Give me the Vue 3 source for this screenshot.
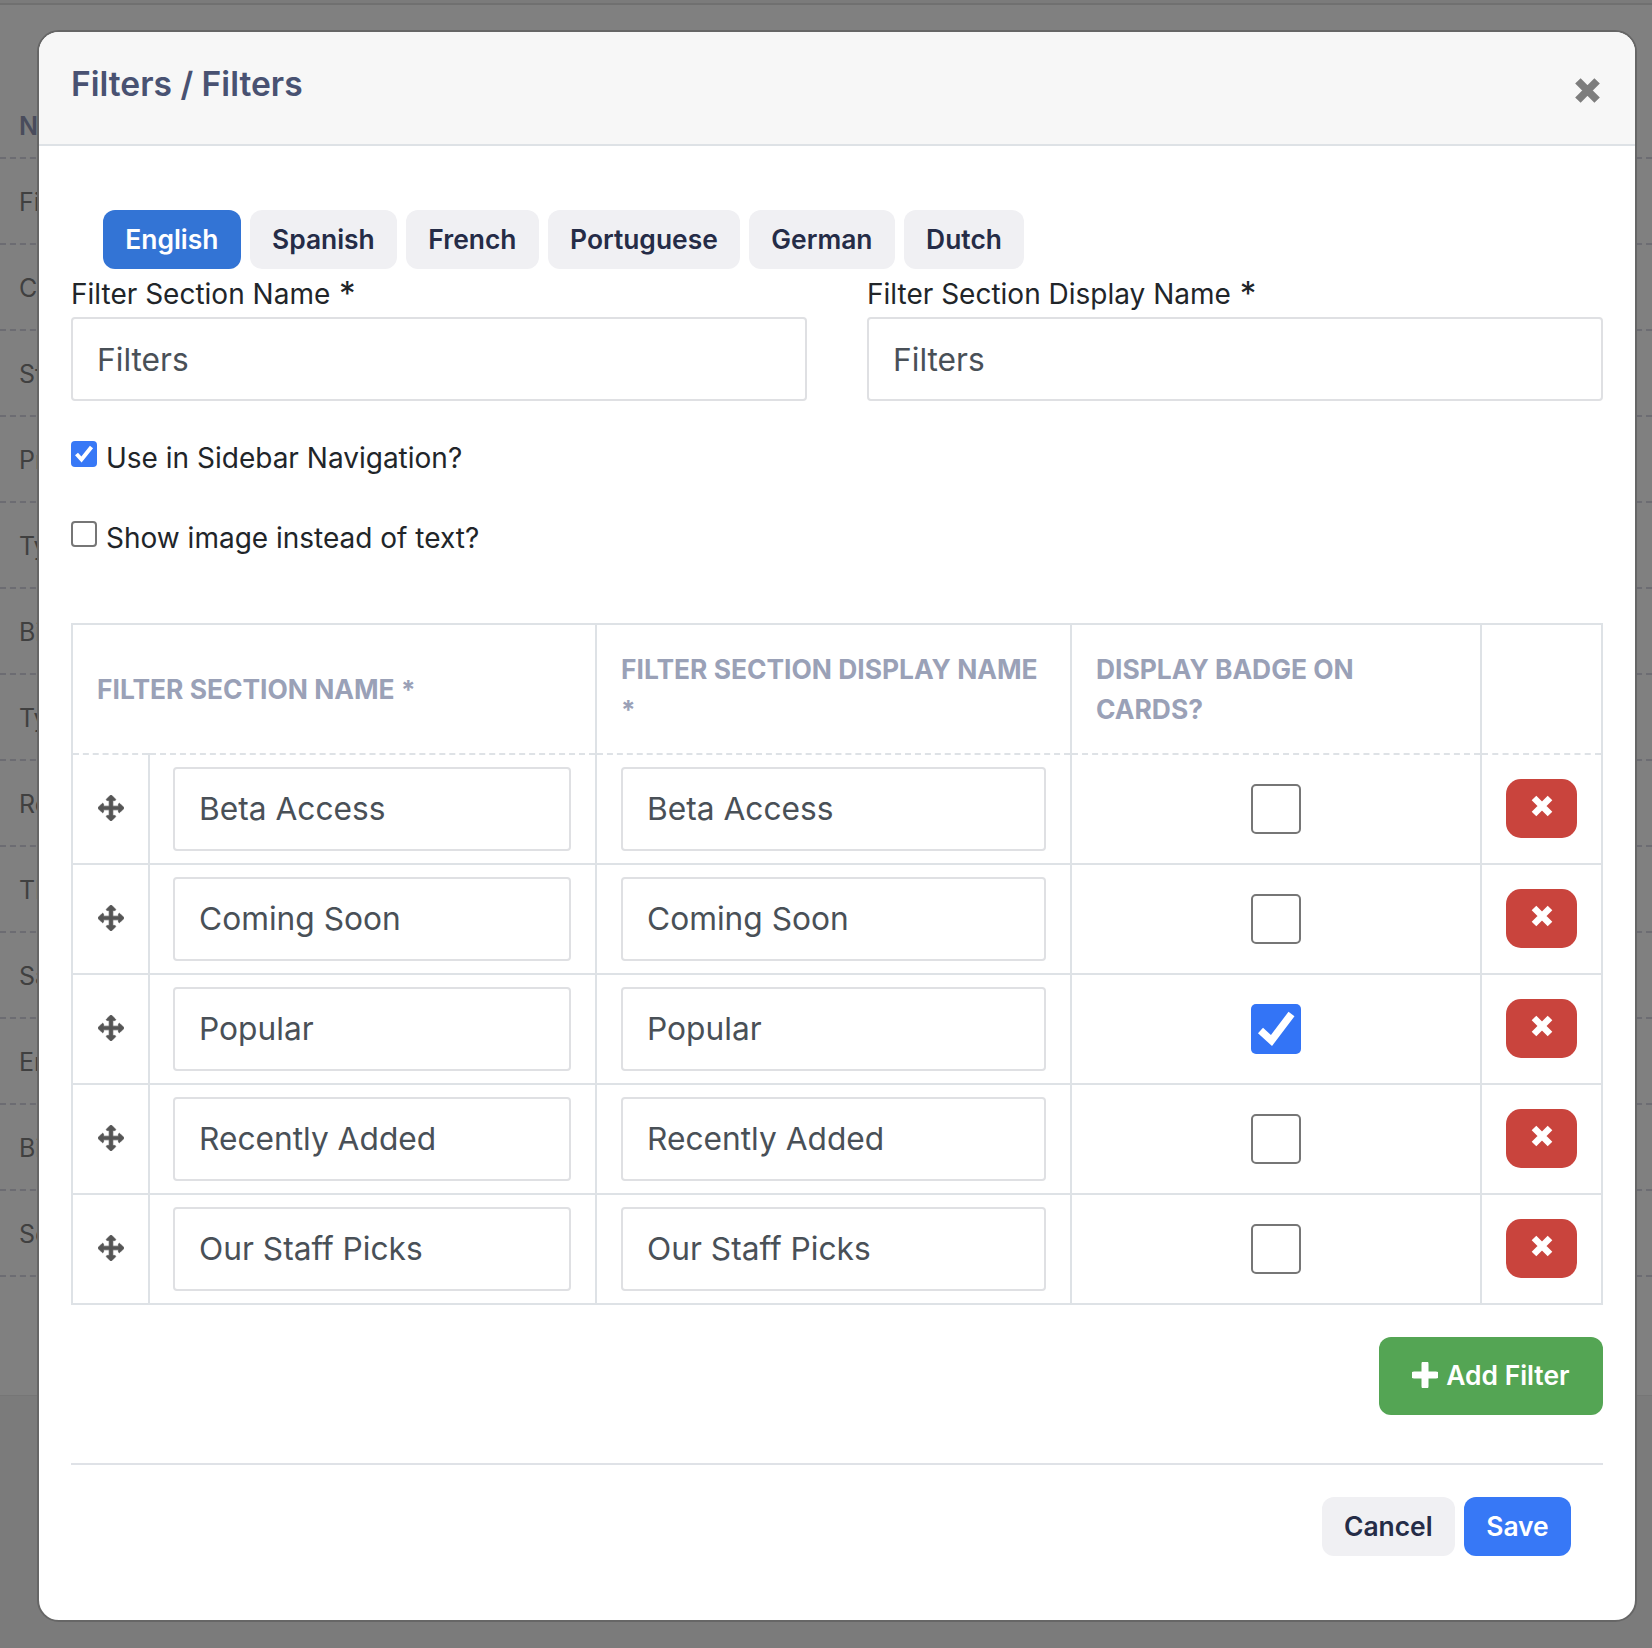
<template>
  <div class="page">
    <!-- dimmed list behind the modal -->
    <div class="backdrop">
      <div class="bg-head">N</div>
      <div v-for="(t, i) in bgRows" :key="i" class="bg-row">{{ t }}</div>
      <div class="bg-end"></div>
    </div>

    <div class="modal">
      <div class="modal-head">
        <h2 class="modal-title">Filters / Filters</h2>
        <svg class="close" viewBox="0 0 26 26"><path d="M3 3 23 23M23 3 3 23" /></svg>
      </div>

      <div class="modal-body">
        <div class="tabs">
          <button v-for="(l, i) in langs" :key="l" class="btn" :class="i === 0 ? 'tab-on' : 'btn-light'">{{ l }}</button>
        </div>

        <div class="fields">
          <div class="field">
            <label class="lbl">Filter Section Name <span class="req">*</span></label>
            <input class="inp" type="text" value="Filters" />
          </div>
          <div class="field">
            <label class="lbl">Filter Section Display Name <span class="req">*</span></label>
            <input class="inp" type="text" value="Filters" />
          </div>
        </div>

        <div class="check-line">
          <span class="box-sm on">
            <svg viewBox="0 0 26 26"><path d="M5.5 13 10.5 18.5 20.5 6" /></svg>
          </span>
          <span>Use in Sidebar Navigation?</span>
        </div>
        <div class="check-line second">
          <span class="box-sm"></span>
          <span>Show image instead of text?</span>
        </div>

        <table class="grid">
          <colgroup>
            <col class="c1" /><col class="c2" /><col class="c3" /><col class="c4" /><col class="c5" />
          </colgroup>
          <thead>
            <tr>
              <th colspan="2">FILTER SECTION NAME <span class="req-h">*</span></th>
              <th>FILTER SECTION DISPLAY NAME <span class="req-h">*</span></th>
              <th>DISPLAY BADGE ON CARDS?</th>
              <th></th>
            </tr>
          </thead>
          <tbody>
            <tr v-for="r in rows" :key="r.name">
              <td class="drag">
                <svg class="move" viewBox="0 0 1792 1792"><path d="M1792 896q0 26-19 45l-256 256q-19 19-45 19t-45-19-19-45v-128h-384v384h128q26 0 45 19t19 45-19 45l-256 256q-19 19-45 19t-45-19l-256-256q-19-19-19-45t19-45 45-19h128v-384h-384v128q0 26-19 45t-45 19-45-19l-256-256q-19-19-19-45t19-45l256-256q19-19 45-19t45 19 19 45v128h384v-384h-128q-26 0-45-19t-19-45 19-45l256-256q19-19 45-19t45 19l256 256q19 19 19 45t-19 45-45 19h-128v384h384v-128q0-26 19-45t45-19 45 19l256 256q19 19 19 45z" /></svg>
              </td>
              <td class="cell-name"><input class="inp" type="text" :value="r.name" /></td>
              <td class="cell-disp"><input class="inp" type="text" :value="r.name" /></td>
              <td class="mid">
                <span class="box-lg" :class="{ on: r.badge }">
                  <svg v-if="r.badge" viewBox="0 0 50 50"><path d="M9.5 26.5 20.5 36.5 40.5 10" /></svg>
                </span>
              </td>
              <td class="mid">
                <button class="del">
                  <svg viewBox="0 0 22 22"><path d="M3 3 19 19M19 3 3 19" /></svg>
                </button>
              </td>
            </tr>
          </tbody>
        </table>

        <div class="add-row">
          <button class="add">
            <svg viewBox="0 0 26 26"><path d="M13 2V24M2 13H24" /></svg>
            Add Filter
          </button>
        </div>

        <div class="foot">
          <button class="btn btn-light">Cancel</button>
          <button class="btn btn-save">Save</button>
        </div>
      </div>
    </div>
  </div>
</template>

<script setup>
const bgRows = ['Fi', 'C', 'St', 'Pr', 'Ty', 'Bi', 'Ty', 'Re', 'Th', 'Sa', 'En', 'Bi', 'Se']
const langs = ['English', 'Spanish', 'French', 'Portuguese', 'German', 'Dutch']
const rows = [
  { name: 'Beta Access', badge: false },
  { name: 'Coming Soon', badge: false },
  { name: 'Popular', badge: true },
  { name: 'Recently Added', badge: false },
  { name: 'Our Staff Picks', badge: false }
]
</script>

<style>
html,
body {
  margin: 0;
  background: #7c7c7c;
}
</style>

<style scoped>
.page {
  position: relative;
  height: 1648px;
  overflow: hidden;
  font-family: Inter, "Liberation Sans", sans-serif;
  color: #212529;
  background: #7b7b7b;
}

/* 背景列表 */
.backdrop {
  height: 1393px;
  box-sizing: border-box;
  background: #808080;
  border-top: 2px solid #707070;
  margin-top: 3px;
  padding: 70px 0 0 19px;
  font-size: 25px;
  color: #404040;
  border-bottom: 1px solid #767676;
}

.bg-head {
  height: 84px;
  line-height: 102px;
  font-weight: 600;
  color: #494c5c;
  border-bottom: 2px dashed #6c6c72;
  margin-left: -19px;
  padding-left: 19px;
  box-sizing: border-box;
}

.bg-row {
  height: 86px;
  line-height: 86px;
  box-sizing: border-box;
  border-bottom: 2px dashed #6c6c72;
  margin-left: -19px;
  padding-left: 19px;
}

.bg-row:last-of-type {
  border-bottom: 0;
}

.modal {
  position: absolute;
  left: 37px;
  top: 30px;
  width: 1600px;
  height: 1592px;
  box-sizing: border-box;
  background: #fff;
  border: 2px solid #666;
  border-radius: 22px;
  overflow: hidden;
}

.modal-head {
  position: relative;
  height: 114px;
  box-sizing: border-box;
  background: #f7f7f7;
  border-bottom: 2px solid #dee2e6;
  padding: 32px 32px 0;
}

.modal-title {
  margin: 0;
  font-size: 33.6px;
  line-height: 40px;
  font-weight: 600;
  color: #495272;
}

.close {
  position: absolute;
  top: 46px;
  right: 35px;
  width: 25px;
  height: 25px;
}

.close path {
  fill: none;
  stroke: #7d7d7d;
  stroke-width: 8;
}

.modal-body {
  padding: 64px 32px 0;
}

.tabs {
  display: flex;
  gap: 9px;
  margin-left: 32px;
}

.btn {
  height: 59px;
  padding: 0 22.3px 2px;
  border: 0;
  border-radius: 12px;
  font-family: inherit;
  font-size: 26.4px;
  font-weight: 600;
  white-space: nowrap;
}

.tab-on {
  background: #3374d5;
  color: #fff;
}

.btn-light {
  background: #f0f0f3;
  color: #252c47;
}

.btn-save {
  background: #3778f6;
  color: #fff;
}

.fields {
  display: grid;
  grid-template-columns: 736px 736px;
  column-gap: 60px;
}

.lbl {
  display: block;
  height: 48px;
  font-size: 28px;
  line-height: 50px;
  color: #212529;
}

.req {
  display: inline-block;
  font-size: 33px;
  line-height: 0;
  margin-left: 1px;
  vertical-align: -1px;
}

.inp {
  display: block;
  width: 100%;
  height: 84px;
  box-sizing: border-box;
  padding: 0 24px;
  border: 2px solid #dfe0e3;
  border-radius: 4px;
  background: #fff;
  font-family: inherit;
  font-size: 31.7px;
  color: #495057;
  outline: none;
}

.check-line {
  display: flex;
  align-items: flex-start;
  gap: 9px;
  margin-top: 40px;
  height: 34px;
  font-size: 28px;
  line-height: 34px;
  color: #212529;
}

.check-line.second {
  margin-top: 46px;
}

.box-sm {
  width: 26px;
  height: 26px;
  box-sizing: border-box;
  margin-top: 0;
  border: 2px solid #767676;
  border-radius: 4px;
  flex: none;
}

.box-sm.on {
  border: 0;
  background: #3778f6;
}

.box-sm svg {
  display: block;
}

.box-sm path {
  fill: none;
  stroke: #fff;
  stroke-width: 4;
}

.grid {
  width: 1530px;
  margin-top: 68px;
  border-collapse: collapse;
  table-layout: fixed;
}

.c1 { width: 77px; }
.c2 { width: 447px; }
.c3 { width: 475px; }
.c4 { width: 410px; }
.c5 { width: 121px; }

.grid th,
.grid td {
  border: 2px solid #dee2e6;
  padding: 0 24px;
  box-sizing: border-box;
}

.grid th {
  height: 130px;
  text-align: left;
  font-size: 26.4px;
  line-height: 40px;
  font-weight: 700;
  color: #9aa1b7;
  border-bottom: 2px dashed #dee2e6;
}

.req-h {
  font-size: 26px;
}

.grid td {
  height: 110px;
}

/* solid would win over the header's dashed line in a collapsed table */
.grid tbody tr:first-child td {
  border-top: 2px dashed #dee2e6;
}

.grid td.drag {
  padding: 0;
  text-align: center;
}

.grid td.cell-name {
  padding: 0 24px 1px 23px;
}

.grid td.cell-disp {
  padding-bottom: 1px;
}

.move {
  display: block;
  width: 26px;
  height: 26px;
  margin: -2px auto 0;
}

.move path {
  fill: #555;
  stroke: #555;
  stroke-width: 50;
}

.grid td.mid {
  text-align: center;
}

.box-lg {
  display: block;
  width: 50px;
  height: 50px;
  margin: 0 auto;
  box-sizing: border-box;
  border: 2px solid #767676;
  border-radius: 5px;
}

.box-lg.on {
  border: 0;
  background: #3374f6;
}

.box-lg svg {
  display: block;
}

.box-lg path {
  fill: none;
  stroke: #fff;
  stroke-width: 7.5;
}

.del {
  display: block;
  width: 71px;
  height: 59px;
  padding: 0;
  border: 0;
  border-radius: 15px;
  background: #c9443d;
  margin: -2px auto 0;
}

.del svg {
  display: block;
  width: 22px;
  height: 22px;
  margin: -4px auto 0;
}

.del path {
  fill: none;
  stroke: #fff;
  stroke-width: 6.5;
}

.add-row {
  display: flex;
  justify-content: flex-end;
  margin-top: 32px;
}

.add {
  display: flex;
  align-items: center;
  gap: 8px;
  height: 78px;
  padding: 0 33.5px 2px;
  border: 0;
  border-radius: 12px;
  background: #54a554;
  color: #fff;
  font-family: inherit;
  font-size: 26.4px;
  font-weight: 600;
}

.add svg {
  width: 26px;
  height: 26px;
}

.add path {
  fill: none;
  stroke: #fff;
  stroke-width: 7;
  stroke-linecap: round;
}

.foot {
  display: flex;
  justify-content: flex-end;
  gap: 9px;
  margin-top: 48px;
  padding: 32px 32px 0 0;
  border-top: 2px solid #dfe2e7;
}
</style>
